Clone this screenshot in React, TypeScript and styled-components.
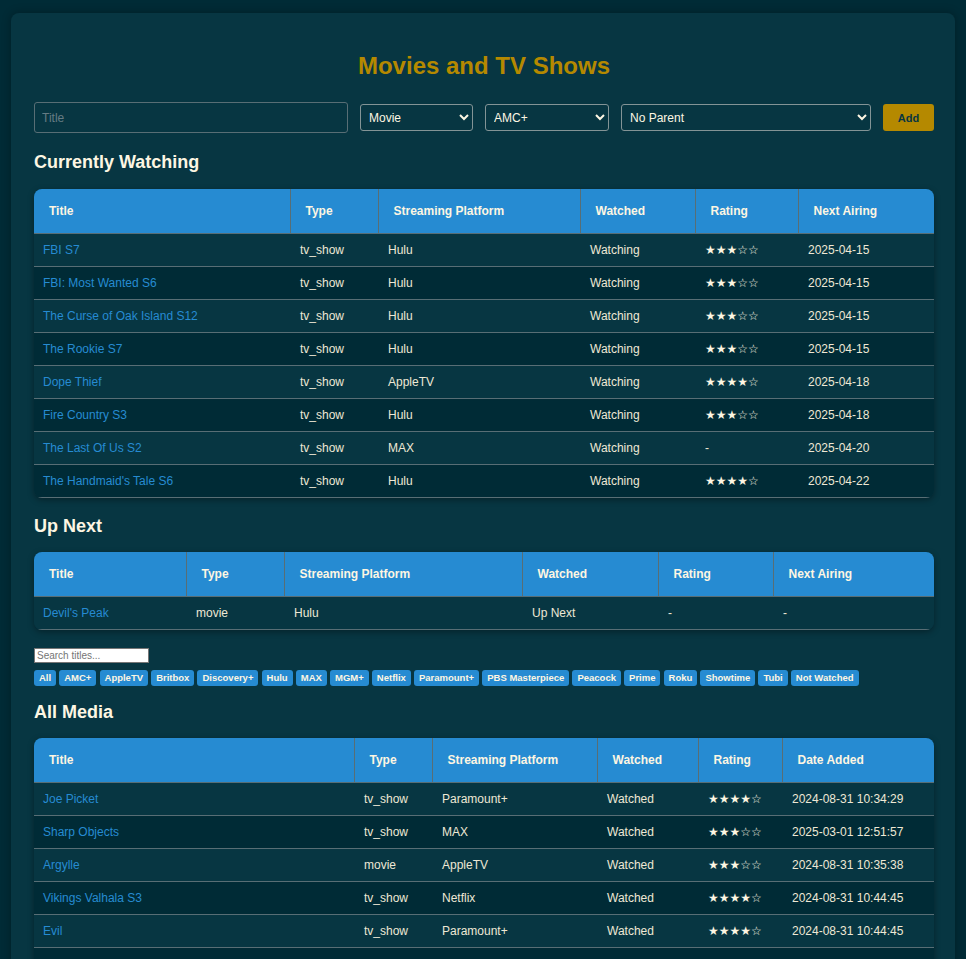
import React from "react";
import styled, { createGlobalStyle } from "styled-components";

const GlobalStyle = createGlobalStyle`
  html, body { margin: 0; padding: 0; }
  body {
    background: #002b36;
    font-family: "Liberation Sans", Arial, sans-serif;
    font-size: 12px;
    color: #eee8d5;
  }
`;

const Container = styled.div`
  margin: 13px 11px;
  background: #073642;
  border-radius: 8px;
  padding: 23px 21px 23px 23px;
  box-shadow: 0 0 10px rgba(0, 0, 0, 0.3);
`;

const Title = styled.h1`
  margin: 16px 0 22px;
  font-size: 24px;
  font-weight: bold;
  color: #b58900;
  text-align: center;
`;

const Form = styled.div`
  display: flex;
  align-items: center;
  gap: 12px;
  margin-bottom: 19px;
`;

const TextInput = styled.input`
  box-sizing: border-box;
  width: 314px;
  height: 31px;
  padding: 0 7px;
  border: 1px solid #586e75;
  border-radius: 3px;
  background: #073642;
  color: #eee8d5;
  font-family: "Liberation Sans", Arial, sans-serif;
  font-size: 12px;
  &::placeholder { color: #657b83; }
`;

const Select = styled.select<{ $w: number }>`
  box-sizing: border-box;
  width: ${(p) => p.$w}px;
  height: 27px;
  padding: 0 4px;
  border: 1px solid #839496;
  border-radius: 3px;
  background: #073642;
  color: #fdf6e3;
  color-scheme: dark;
  font-family: "Liberation Sans", Arial, sans-serif;
  font-size: 12px;
`;

const AddButton = styled.button`
  width: 51px;
  height: 27px;
  border: none;
  border-radius: 3px;
  background: #b58900;
  color: #073642;
  font-family: "Liberation Sans", Arial, sans-serif;
  font-size: 11px;
  font-weight: bold;
`;

const Heading = styled.h2<{ $gap: number }>`
  margin: 0 0 ${(p) => p.$gap}px;
  font-size: 18px;
  font-weight: bold;
  color: #fdf6e3;
`;

const TableWrap = styled.div`
  border-radius: 8px;
  overflow: hidden;
  box-shadow: 0 2px 6px rgba(0, 0, 0, 0.35);
  margin-bottom: 18px;
`;

const Table = styled.table`
  width: 100%;
  border-collapse: collapse;
  table-layout: fixed;
`;

const Col = styled.col<{ $w: number }>`
  width: ${(p) => p.$w}px;
`;

const Th = styled.th`
  background: #268bd2;
  color: #fdf6e3;
  font-weight: bold;
  font-size: 12px;
  text-align: left;
  padding: 15px;
  line-height: 14px;
  border-bottom: 1px solid #586e75;
  & + & { border-left: 1px solid #586e75; }
`;

const Tr = styled.tr`
  &:nth-child(odd) { background: #073642; }
  &:nth-child(even) { background: #002b36; }
`;

const Td = styled.td`
  padding: 9px 9px 9px 10px;
  line-height: 14px;
  font-size: 12px;
  color: #eee8d5;
  border-bottom: 1px solid #586e75;
  white-space: nowrap;
  &:first-child { padding-left: 9px; }
`;

const TitleLink = styled.a`
  color: #268bd2;
  text-decoration: none;
`;

const Stars = styled.span`
  font-family: "DejaVu Sans", sans-serif;
  font-size: 12px;
  color: #fdf6e3;
`;

const Search = styled.input`
  display: block;
  box-sizing: border-box;
  width: 115px;
  height: 15px;
  padding: 0 2px;
  margin-bottom: 7px;
  border: 1px solid #767676;
  border-radius: 0;
  background: #ffffff;
  color: #000;
  font-family: "Liberation Sans", Arial, sans-serif;
  font-size: 10px;
  &::placeholder { color: #757575; }
`;

const FilterBar = styled.div`
  display: flex;
  flex-wrap: wrap;
  gap: 3.1px;
  margin-bottom: 16px;
`;

const FilterButton = styled.button`
  height: 16px;
  padding: 0 5px;
  border: none;
  border-radius: 3px;
  background: #268bd2;
  color: #fdf6e3;
  font-family: "Liberation Sans", Arial, sans-serif;
  font-size: 9.5px;
  font-weight: bold;
  line-height: 16px;
`;

type Row = [string, string, string, string, number | null, string];

const renderStars = (n: number | null) =>
  n === null ? "-" : <Stars>{"★".repeat(n) + "☆".repeat(5 - n)}</Stars>;

function MediaTable({ headers, widths, rows }: { headers: string[]; widths: number[]; rows: Row[] }) {
  return (
    <TableWrap>
      <Table>
        <colgroup>
          {widths.map((w, i) => (
            <Col key={i} $w={w} />
          ))}
        </colgroup>
        <thead>
          <tr>
            {headers.map((h) => (
              <Th key={h}>{h}</Th>
            ))}
          </tr>
        </thead>
        <tbody>
          {rows.map((r, i) => (
            <Tr key={i}>
              <Td>
                <TitleLink href="#">{r[0]}</TitleLink>
              </Td>
              <Td>{r[1]}</Td>
              <Td>{r[2]}</Td>
              <Td>{r[3]}</Td>
              <Td>{renderStars(r[4])}</Td>
              <Td>{r[5]}</Td>
            </Tr>
          ))}
        </tbody>
      </Table>
    </TableWrap>
  );
}

const watching: Row[] = [
  ["FBI S7", "tv_show", "Hulu", "Watching", 3, "2025-04-15"],
  ["FBI: Most Wanted S6", "tv_show", "Hulu", "Watching", 3, "2025-04-15"],
  ["The Curse of Oak Island S12", "tv_show", "Hulu", "Watching", 3, "2025-04-15"],
  ["The Rookie S7", "tv_show", "Hulu", "Watching", 3, "2025-04-15"],
  ["Dope Thief", "tv_show", "AppleTV", "Watching", 4, "2025-04-18"],
  ["Fire Country S3", "tv_show", "Hulu", "Watching", 3, "2025-04-18"],
  ["The Last Of Us S2", "tv_show", "MAX", "Watching", null, "2025-04-20"],
  ["The Handmaid's Tale S6", "tv_show", "Hulu", "Watching", 4, "2025-04-22"],
];

const upNext: Row[] = [["Devil's Peak", "movie", "Hulu", "Up Next", null, "-"]];

const allMedia: Row[] = [
  ["Joe Picket", "tv_show", "Paramount+", "Watched", 4, "2024-08-31 10:34:29"],
  ["Sharp Objects", "tv_show", "MAX", "Watched", 3, "2025-03-01 12:51:57"],
  ["Argylle", "movie", "AppleTV", "Watched", 3, "2024-08-31 10:35:38"],
  ["Vikings Valhala S3", "tv_show", "Netflix", "Watched", 4, "2024-08-31 10:44:45"],
  ["Evil", "tv_show", "Paramount+", "Watched", 4, "2024-08-31 10:44:45"],
  ["Reacher S2", "tv_show", "Prime", "Watched", 4, "2024-08-31 10:44:45"],
  ["Slow Horses S4", "tv_show", "AppleTV", "Watched", 5, "2024-08-31 10:44:45"],
];

const filters = [
  "All", "AMC+", "AppleTV", "Britbox", "Discovery+", "Hulu", "MAX", "MGM+", "Netflix",
  "Paramount+", "PBS Masterpiece", "Peacock", "Prime", "Roku", "Showtime", "Tubi", "Not Watched",
];

export default function App() {
  return (
    <>
      <GlobalStyle />
      <Container>
        <Title>Movies and TV Shows</Title>
        <Form>
          <TextInput placeholder="Title" />
          <Select $w={113} defaultValue="movie">
            <option value="movie">Movie</option>
            <option value="tv_show">TV Show</option>
          </Select>
          <Select $w={124} defaultValue="amc">
            <option value="amc">AMC+</option>
            <option value="hulu">Hulu</option>
          </Select>
          <Select $w={250} defaultValue="none">
            <option value="none">No Parent</option>
          </Select>
          <AddButton>Add</AddButton>
        </Form>

        <Heading $gap={16}>Currently Watching</Heading>
        <MediaTable
          headers={["Title", "Type", "Streaming Platform", "Watched", "Rating", "Next Airing"]}
          widths={[256, 88, 202, 115, 103, 136]}
          rows={watching}
        />

        <Heading $gap={15}>Up Next</Heading>
        <MediaTable
          headers={["Title", "Type", "Streaming Platform", "Watched", "Rating", "Next Airing"]}
          widths={[152, 98, 238, 136, 115, 161]}
          rows={upNext}
        />

        <Search placeholder="Search titles..." />
        <FilterBar>
          {filters.map((f) => (
            <FilterButton key={f}>{f}</FilterButton>
          ))}
        </FilterBar>

        <Heading $gap={15}>All Media</Heading>
        <MediaTable
          headers={["Title", "Type", "Streaming Platform", "Watched", "Rating", "Date Added"]}
          widths={[320, 78, 165, 101, 84, 152]}
          rows={allMedia}
        />
      </Container>
    </>
  );
}
